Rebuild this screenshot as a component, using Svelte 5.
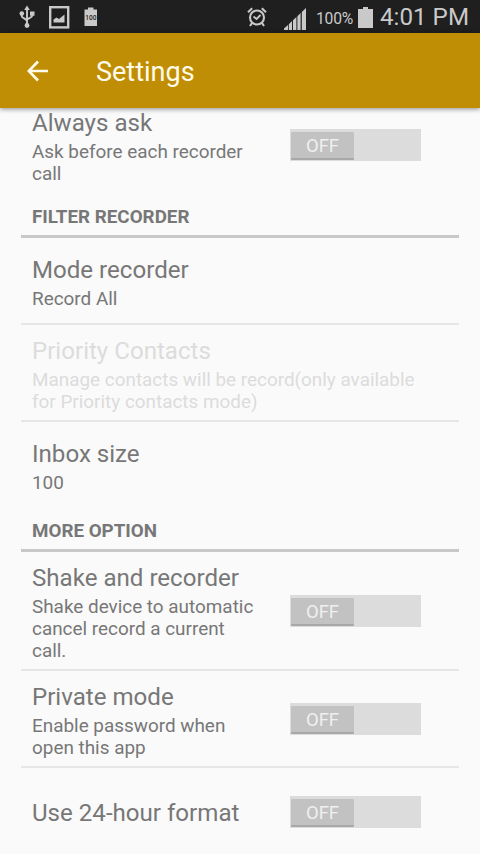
<script lang="ts">
  interface Item {
    title: string
    summary?: string
    toggle?: boolean
    disabled?: boolean
  }

  interface Section {
    heading?: string
    items: Item[]
  }

  const sections: Section[] = [
    {
      items: [
        { title: "Always ask", summary: "Ask before each recorder call", toggle: true },
      ],
    },
    {
      heading: "FILTER RECORDER",
      items: [
        { title: "Mode recorder", summary: "Record All" },
        {
          title: "Priority Contacts",
          summary:
            "Manage contacts will be record(only available for Priority contacts mode)",
          disabled: true,
        },
        { title: "Inbox size", summary: "100" },
      ],
    },
    {
      heading: "MORE OPTION",
      items: [
        {
          title: "Shake and recorder",
          summary: "Shake device to automatic cancel record a current call.",
          toggle: true,
        },
        {
          title: "Private mode",
          summary: "Enable password when open this app",
          toggle: true,
        },
        { title: "Use 24-hour format", toggle: true },
      ],
    },
  ]
</script>

<div class="screen">
  <div class="status-bar">
    <svg class="usb" width="16" height="24" viewBox="0 0 16 24">
      <path d="M8 4v16M2.700 9v2c0 2.500 5.300 2.500 5.300 5.500M13.300 9v1.500c0 2.500-5.300 2.500-5.300 4.500" fill="none" stroke="currentColor" stroke-width="1.900" />
      <path d="M8 .5l2.800 4.500H5.200z" fill="currentColor" />
      <circle cx="2.800" cy="8.500" r="2.300" fill="currentColor" />
      <rect x="11" y="6.500" width="4.500" height="4.200" fill="currentColor" />
      <circle cx="8" cy="20.500" r="2.400" fill="currentColor" />
    </svg>
    <svg class="picture" width="21" height="23" viewBox="0 0 21 23">
      <rect x="1.200" y="1.200" width="18" height="20.200" fill="none" stroke="currentColor" stroke-width="2.400" />
      <path d="M4.500 16.500v-3l3-2 2.500 1.500 5.500-4.500v8z" fill="currentColor" />
    </svg>
    <svg class="battery-note" width="14" height="20" viewBox="0 0 14 20">
      <path d="M4 .5h5.500v2H13V19H.500V2.500H4z" fill="currentColor" />
      <text x="6.800" y="12.600" text-anchor="middle">100</text>
    </svg>
    <div class="spacer"></div>
    <svg class="alarm" width="20" height="20" viewBox="0 0 20 20">
      <g fill="none" stroke="currentColor" stroke-width="2.100">
        <circle cx="10" cy="10.500" r="7" />
        <path d="M6.500 9.500l3 2.500 4-4" stroke-width="1.800" />
        <path d="M1 5.200L5.200 1.300M19 5.200L14.800 1.300M5 16l-2 3M15 16l2 3" />
      </g>
    </svg>
    <svg class="signal" width="22" height="22" viewBox="0 0 22 22">
      <path d="M0 22v-1.500L4 17v5zM4.800 22v-5.800L8 13v9zM9 22V12.200L12.400 9v13zM13.400 22V8.200l3.200-3.200v17zM17.800 22V4L22 0v22z" fill="currentColor" />
    </svg>
    <span class="percent">100%</span>
    <svg class="battery" width="15" height="21" viewBox="0 0 15 21">
      <path d="M5 0h5v2h5v19H0V2h5z" fill="currentColor" />
    </svg>
    <span class="clock">4:01 PM</span>
  </div>

  <header class="app-bar">
    <button type="button" class="back" aria-label="Back">
      <svg width="22" height="22" viewBox="0 0 22 22">
        <path d="M21 11H2M11 1.500L1.800 11l9.200 9.500" fill="none" stroke="currentColor" stroke-width="2.600" />
      </svg>
    </button>
    <h1>Settings</h1>
  </header>

  <main class="list">
    {#each sections as section}
      <section>
        {#if section.heading}
          <h2>{section.heading}</h2>
        {/if}
        {#each section.items as item}
          <div class="row" class:toggle={item.toggle} class:disabled={item.disabled}>
            <div class="text" class:single={!item.summary}>
              <div class="title">{item.title}</div>
              {#if item.summary}
                <div class="summary">{item.summary}</div>
              {/if}
            </div>
            {#if item.toggle}
              <button type="button" class="switch" role="switch" aria-checked="false" aria-label={item.title}>
                <span class="thumb">OFF</span>
              </button>
            {/if}
          </div>
        {/each}
      </section>
    {/each}
  </main>
</div>

<style>
  :global(body) {
    overflow: hidden;
  }

  .screen {
    display: flex;
    flex-direction: column;
    width: 480px;
    height: 854px;
    overflow: hidden;
    background: #fafafa;
    color: #777;
    font-family: Roboto, "Liberation Sans", sans-serif;
  }

  .status-bar {
    display: flex;
    flex: none;
    align-items: center;
    height: 33px;
    box-sizing: border-box;
    padding: 1px 11px 0 19px;
    background: #1f1f1f;
    color: #c9c9c9;
  }

  .picture {
    margin-left: 14px;
  }

  .battery-note {
    margin-left: 14px;
  }

  .battery-note text {
    fill: #1f1f1f;
    font-size: 6.5px;
    font-weight: 500;
  }

  .spacer {
    flex: 1;
  }

  .signal {
    margin: 3px 0 0 17px;
  }

  .percent {
    width: 37px;
    margin: 2px 0 0 10px;
    font-size: 15.7px;
    letter-spacing: -0.2px;
    white-space: nowrap;
  }

  .battery {
    margin-left: 5px;
  }

  .clock {
    margin-left: 7px;
    font-size: 24.2px;
    line-height: 32px;
    white-space: nowrap;
  }

  .app-bar {
    z-index: 1;
    display: flex;
    flex: none;
    align-items: center;
    height: 75px;
    background: #c08e04;
    box-shadow: 0 1px 5px rgba(0, 0, 0, 0.45);
    color: #fffbe8;
  }

  .back {
    display: flex;
    margin-left: 27px;
    padding: 0;
    border: 0;
    background: none;
    color: inherit;
  }

  h1 {
    margin: 3px 0 0 47px;
    font-size: 27px;
    font-weight: 400;
  }

  .list {
    flex: 1;
    margin-top: -11px;
    padding: 0 21px;
  }

  h2 {
    box-sizing: border-box;
    height: 46px;
    margin: 0;
    padding: 14px 11px 0;
    border-bottom: 3px solid #c8c8c8;
    font-size: 18.8px;
    font-weight: 700;
    line-height: 22px;
  }

  .row {
    display: flex;
    align-items: center;
    box-sizing: border-box;
    min-height: 87px;
    padding: 8px 38px 7px 11px;
    border-bottom: 2px solid #e6e6e6;
  }

  .row:last-child {
    min-height: 84px;
    border-bottom: 0;
  }

  .row.toggle:last-child {
    min-height: 86px;
  }

  .text {
    flex: 1;
    padding-top: 4px;
  }

  .text.single {
    padding-top: 2px;
  }

  .title {
    font-size: 24.1px;
    line-height: 28px;
  }

  .summary {
    margin-top: 4px;
    font-size: 18.9px;
    line-height: 22px;
  }

  .disabled {
    color: #dcdcdc;
  }

  .switch {
    display: flex;
    flex: none;
    width: 131px;
    height: 32px;
    margin-left: 27px;
    padding: 3px 1px 1px;
    border: 0;
    background: #dcdcdc;
    font: inherit;
  }

  .thumb {
    box-sizing: border-box;
    width: 63px;
    height: 28px;
    border-bottom: 2px solid #a8a8a8;
    border-radius: 1px;
    background: #c2c2c2;
    color: #f0f0f0;
    font-size: 18.5px;
    line-height: 28px;
    text-align: center;
  }
</style>
